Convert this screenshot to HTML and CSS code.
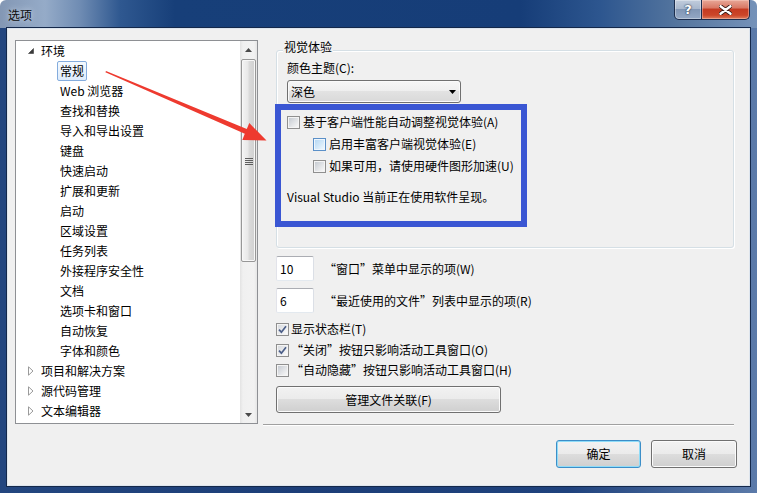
FILE: index.html
```html
<!DOCTYPE html>
<html lang="zh-CN">
<head>
<meta charset="utf-8">
<title>选项</title>
<link rel="stylesheet" href="styles.css">
</head>
<body>
<div class="window">
  <div class="titlebar">
    <span class="title">选项</span>
    <div class="caption-btns">
      <span class="cap help">?</span>
      <span class="cap close">
        <svg width="13" height="10" viewBox="0 0 13 10"><path d="M1.5 1.2 L11.5 8.8 M11.5 1.2 L1.5 8.8" stroke="#3a1a14" stroke-width="4.2" stroke-linecap="round"/><path d="M1.5 1.2 L11.5 8.8 M11.5 1.2 L1.5 8.8" stroke="#fff" stroke-width="2.4" stroke-linecap="round"/></svg>
      </span>
    </div>
  </div>
  <div class="client">
    <div class="main">
      <div class="tree">
        <ul class="tree-list">
          <li class="node l1"><span class="exp"><svg width="6" height="6" viewBox="0 0 6 6"><path d="M5.5 0.5 L5.5 5.5 L0.5 5.5 Z" fill="#3b3b3b" stroke="#3b3b3b" stroke-width="0.6"/></svg></span><span class="lbl">环境</span></li>
          <li class="node l2"><span class="lbl sel">常规</span></li>
          <li class="node l2"><span class="lbl">Web 浏览器</span></li>
          <li class="node l2"><span class="lbl">查找和替换</span></li>
          <li class="node l2"><span class="lbl">导入和导出设置</span></li>
          <li class="node l2"><span class="lbl">键盘</span></li>
          <li class="node l2"><span class="lbl">快速启动</span></li>
          <li class="node l2"><span class="lbl">扩展和更新</span></li>
          <li class="node l2"><span class="lbl">启动</span></li>
          <li class="node l2"><span class="lbl">区域设置</span></li>
          <li class="node l2"><span class="lbl">任务列表</span></li>
          <li class="node l2"><span class="lbl">外接程序安全性</span></li>
          <li class="node l2"><span class="lbl">文档</span></li>
          <li class="node l2"><span class="lbl">选项卡和窗口</span></li>
          <li class="node l2"><span class="lbl">自动恢复</span></li>
          <li class="node l2"><span class="lbl">字体和颜色</span></li>
          <li class="node l1"><span class="exp"><svg width="6" height="10" viewBox="0 0 6 10"><path d="M0.5 0.8 L5 5 L0.5 9.2 Z" fill="#fff" stroke="#9a9a9a" stroke-width="1"/></svg></span><span class="lbl">项目和解决方案</span></li>
          <li class="node l1"><span class="exp"><svg width="6" height="10" viewBox="0 0 6 10"><path d="M0.5 0.8 L5 5 L0.5 9.2 Z" fill="#fff" stroke="#9a9a9a" stroke-width="1"/></svg></span><span class="lbl">源代码管理</span></li>
          <li class="node l1"><span class="exp"><svg width="6" height="10" viewBox="0 0 6 10"><path d="M0.5 0.8 L5 5 L0.5 9.2 Z" fill="#fff" stroke="#9a9a9a" stroke-width="1"/></svg></span><span class="lbl">文本编辑器</span></li>
        </ul>
        <div class="sb">
          <div class="sb-btn"><svg width="7" height="4" viewBox="0 0 7 4"><path d="M0 4 L3.5 0 L7 4 Z" fill="#4a4a4a"/></svg></div>
          <div class="sb-track">
            <div class="sb-thumb">
              <svg width="8" height="8" viewBox="0 0 8 8"><path d="M0 0.5 H8 M0 2.5 H8 M0 4.5 H8 M0 6.5 H8" stroke="#5e5e5e" stroke-width="1"/></svg>
            </div>
          </div>
          <div class="sb-btn"><svg width="7" height="4" viewBox="0 0 7 4"><path d="M0 0 L3.5 4 L7 0 Z" fill="#4a4a4a"/></svg></div>
        </div>
      </div>
      <div class="pane">
        <div class="pane-body">
          <div class="groupbox">
            <span class="legend">视觉体验</span>
            <div class="field-label">颜色主题(C):</div>
            <div class="combo">
              <span>深色</span>
              <svg width="7" height="4" viewBox="0 0 7 4"><path d="M0 0 L3.5 4 L7 0 Z" fill="#000"/></svg>
            </div>
            <div class="highlight">
              <div class="check"><span class="cb"></span><span>基于客户端性能自动调整视觉体验(A)</span></div>
              <div class="check indent"><span class="cb hot"></span><span>启用丰富客户端视觉体验(E)</span></div>
              <div class="check indent"><span class="cb"></span><span>如果可用，请使用硬件图形加速(U)</span></div>
              <div class="note">Visual Studio 当前正在使用软件呈现。</div>
            </div>
          </div>
          <div class="num-row first"><span class="textbox">10</span><span>“窗口”菜单中显示的项(W)</span></div>
          <div class="num-row"><span class="textbox">6</span><span>“最近使用的文件”列表中显示的项(R)</span></div>
          <div class="check opt opt1"><span class="cb checked"><svg width="9" height="9" viewBox="0 0 9 9"><path d="M1 4.6 L3.4 7.2 L8 1.2" fill="none" stroke="#4b5e88" stroke-width="1.7"/></svg></span><span>显示状态栏(T)</span></div>
          <div class="check opt opt2"><span class="cb checked"><svg width="9" height="9" viewBox="0 0 9 9"><path d="M1 4.6 L3.4 7.2 L8 1.2" fill="none" stroke="#4b5e88" stroke-width="1.7"/></svg></span><span>“关闭”按钮只影响活动工具窗口(O)</span></div>
          <div class="check opt opt3"><span class="cb"></span><span>“自动隐藏”按钮只影响活动工具窗口(H)</span></div>
          <button class="btn wide">管理文件关联(F)</button>
        </div>
        <div class="separator"></div>
      </div>
    </div>
    <div class="footer">
      <button class="btn ok default">确定</button>
      <button class="btn cancel">取消</button>
    </div>
  </div>
  <svg class="annot-arrow" width="757" height="493" viewBox="0 0 757 493">
    <path d="M106 71 L246.8 129.1 L249.3 123.1 L266.5 140.5 L242.3 139.9 L244.8 133.7 L105.4 72.3 Z" fill="#ee3a2f"/>
  </svg>
</div>
</body>
</html>
```

FILE: styles.css
```css
html, body {
  margin: 0;
  padding: 0;
  background: #ffffff;
}

body {
  font-family: "Noto Sans CJK SC", "Noto Sans", sans-serif;
  font-size: 12px;
  color: #000;
}

.window {
  position: relative;
  width: 757px;
  height: 493px;
  box-sizing: border-box;
  padding: 0 7px 7px;
  display: flex;
  flex-direction: column;
  border-radius: 6px 6px 0 0;
  overflow: hidden;
  background:
    linear-gradient(to right, #8397b4 0, #95abc8 45px, #6f8cb3 80px, #2f5890 120px, #173f79 175px, #163d78 520px, #2d568f 600px, #55769f 680px, #7592b9 757px) top / 100% 28px no-repeat,
    linear-gradient(to right, #23467f 0, #1c3e78 40%, #1f427d 75%, #5b7aa9 100%);
}

/* Title bar */
.titlebar {
  height: 28px;
  display: flex;
  align-items: flex-start;
}

.title {
  margin: 6px 0 0 1px;
  line-height: 18px;
  color: #0c0c0c;
  text-shadow: 0 0 6px rgba(230, 238, 248, 0.9);
}

.caption-btns {
  margin-left: auto;
  display: flex;
}

.cap {
  height: 20px;
  box-sizing: border-box;
  display: flex;
  align-items: center;
  justify-content: center;
  border: 1px solid #1c2d4d;
  border-top: none;
}

.help {
  width: 28px;
  border-radius: 0 0 0 5px;
  background: linear-gradient(#c1cddd 0%, #a9b8cd 45%, #8196b5 50%, #94a8c5 100%);
  box-shadow: inset 0 0 0 1px rgba(255, 255, 255, 0.35);
  color: #fff;
  font: bold 13px "DejaVu Sans", sans-serif;
  text-shadow: 0 0 2px #1f2f4a, 0 0 1px #1f2f4a;
}

.close {
  width: 48px;
  border-left: none;
  border-radius: 0 0 5px 0;
  background: linear-gradient(#e8a898 0%, #d97a66 40%, #c53b22 50%, #cc4629 80%, #de7e5e 100%);
  box-shadow: inset 0 0 0 1px rgba(255, 220, 210, 0.4);
}

/* Client area */
.client {
  flex: 1;
  display: flex;
  flex-direction: column;
  background: #f0f0f0;
  border: 1px solid #dde5ee;
  box-shadow: 0 0 0 1px #14284a;
}

.main {
  display: flex;
  align-items: flex-start;
  padding: 11px 0 0 7px;
}

/* Tree */
.tree {
  width: 243px;
  height: 384px;
  box-sizing: border-box;
  border: 1px solid #8e9094;
  background: #fff;
  display: flex;
}

.tree-list {
  flex: 1;
  list-style: none;
  margin: 0;
  padding: 0;
  overflow: hidden;
}

.node {
  height: 20px;
  display: flex;
  align-items: center;
  white-space: nowrap;
}

.l1 {
  padding-left: 12px;
}

.l2 {
  padding-left: 41px;
}

.exp {
  width: 13px;
  display: flex;
  align-items: center;
}

.lbl {
  height: 20px;
  box-sizing: border-box;
  line-height: 18px;
  border: 1px solid transparent;
  padding: 0 2px;
}

.l1 .lbl {
  padding: 0;
  border: none;
  line-height: 20px;
}

.sel {
  border-color: #84acdd;
  border-radius: 2px;
  background: linear-gradient(#f5fafe, #deecfc);
}

/* Scrollbar */
.sb {
  width: 17px;
  display: flex;
  flex-direction: column;
  background: linear-gradient(to right, #e3e3e3 0, #f0f0f0 3px, #f2f2f2 14px, #e6e6e6 17px);
}

.sb-btn {
  height: 17px;
  display: flex;
  align-items: center;
  justify-content: center;
}

.sb-track {
  flex: 1;
  padding: 1px 1px 0 1px;
}

.sb-thumb {
  height: 203px;
  box-sizing: border-box;
  border: 1px solid #979797;
  border-radius: 2px;
  background: linear-gradient(to right, #f4f4f4 0%, #e8e8e8 45%, #dadada 55%, #d0d0d0 100%);
  box-shadow: inset 0 0 0 1px #f7f7f7;
  display: flex;
  align-items: center;
  justify-content: center;
  padding-top: 3px;
}

/* Right pane */
.pane {
  margin-left: 5px;
  width: 471px;
  height: 385px;
  display: flex;
  flex-direction: column;
}

.pane-body {
  flex: 1;
  padding: 10px 0 0 13px;
  display: flex;
  flex-direction: column;
  align-items: flex-start;
}

.separator {
  height: 1px;
  background: #a0a0a0;
  border-bottom: 1px solid #ffffff;
  margin-bottom: -1px;
}

.groupbox {
  width: 458px;
  height: 198px;
  box-sizing: border-box;
  border: 1px solid #d5dfe5;
  border-radius: 3px;
  box-shadow: inset 1px 1px 0 #ffffff, 1px 1px 0 #ffffff;
  padding: 0 0 0 10px;
  display: flex;
  flex-direction: column;
  align-items: flex-start;
}

.legend {
  margin: -12px 0 0 -4px;
  padding: 0 1px;
  line-height: 16px;
  background: #f0f0f0;
}

.field-label {
  margin-top: 5px;
  line-height: 16px;
}

.combo {
  margin-top: 4px;
  width: 174px;
  height: 23px;
  box-sizing: border-box;
  border: 1px solid #707070;
  border-radius: 3px;
  background: linear-gradient(#f6f6f6 0%, #eeeeee 50%, #e2e2e2 50%, #d9d9d9 100%);
  box-shadow: inset 0 0 0 1px #fafafa;
  display: flex;
  align-items: center;
  justify-content: space-between;
  padding: 0 4px 0 3px;
  line-height: 16px;
}

.highlight {
  margin: 1px 0 0 -12px;
  width: 252px;
  height: 123px;
  box-sizing: border-box;
  border: 6px solid #3a56d3;
  padding: 4px 0 0 6px;
  display: flex;
  flex-direction: column;
  align-items: flex-start;
}

.check {
  display: flex;
  align-items: center;
  gap: 3px;
  height: 16px;
  line-height: 16px;
  white-space: nowrap;
}

.highlight .check + .check {
  margin-top: 6px;
}

.indent {
  margin-left: 26px;
}

.note {
  margin-top: 15px;
  line-height: 16px;
}

/* Checkbox */
.cb {
  width: 13px;
  height: 13px;
  box-sizing: border-box;
  border: 1px solid #8f8f8f;
  background: #f4f4f4;
  padding: 1px;
  display: flex;
  align-items: center;
  justify-content: center;
  position: relative;
  flex: none;
}

.cb::before {
  content: "";
  position: absolute;
  left: 1px;
  top: 1px;
  width: 9px;
  height: 9px;
  background: linear-gradient(135deg, #c6cbd2 0%, #e2e4e7 55%, #f7f7f7 100%);
}

.cb svg {
  position: relative;
}

.cb.hot {
  border-color: #5b90c8;
  background: #eef6fd;
}

.cb.hot::before {
  background: linear-gradient(135deg, #b7d9f4 0%, #d4e9f9 55%, #eef7fe 100%);
}

.cb.checked::before {
  background: linear-gradient(135deg, #d7dade 0%, #ebecee 55%, #fbfbfb 100%);
}

/* Number rows */
.num-row {
  display: flex;
  align-items: center;
  margin-top: 7px;
  white-space: nowrap;
}

.num-row.first {
  margin-top: 8px;
}

.textbox {
  width: 38px;
  height: 25px;
  box-sizing: border-box;
  border: 1px solid;
  border-color: #abadb3 #dbdfe6 #e3e9ef #e2e3ea;
  border-radius: 2px;
  background: #fff;
  padding-left: 3px;
  line-height: 23px;
  margin-right: 10px;
}

.opt {
  gap: 2px;
}

.opt1 {
  margin-top: 8px;
}

.opt2 {
  margin-top: 5px;
}

.opt3 {
  margin-top: 4px;
}

/* Buttons */
.btn {
  font: inherit;
  color: #000;
  height: 28px;
  box-sizing: border-box;
  border: 1px solid #707070;
  border-radius: 3px;
  background: linear-gradient(#f2f2f2 0%, #ebebeb 50%, #dddddd 50%, #cfcfcf 100%);
  box-shadow: inset 0 0 0 1px #fbfbfb;
  padding: 0;
  line-height: 16px;
}

.btn.wide {
  margin-top: 8px;
  width: 225px;
  height: 27px;
}

.footer {
  display: flex;
  justify-content: flex-end;
  gap: 10px;
  padding: 15px 12px 0 0;
}

.ok {
  width: 85px;
}

.cancel {
  width: 86px;
}

.btn.default {
  border-color: #3c8ec8;
  box-shadow: inset 0 0 0 1px #8fdcf8;
}

/* Annotation arrow overlay */
.annot-arrow {
  position: absolute;
  left: 0;
  top: 0;
  pointer-events: none;
}
```
